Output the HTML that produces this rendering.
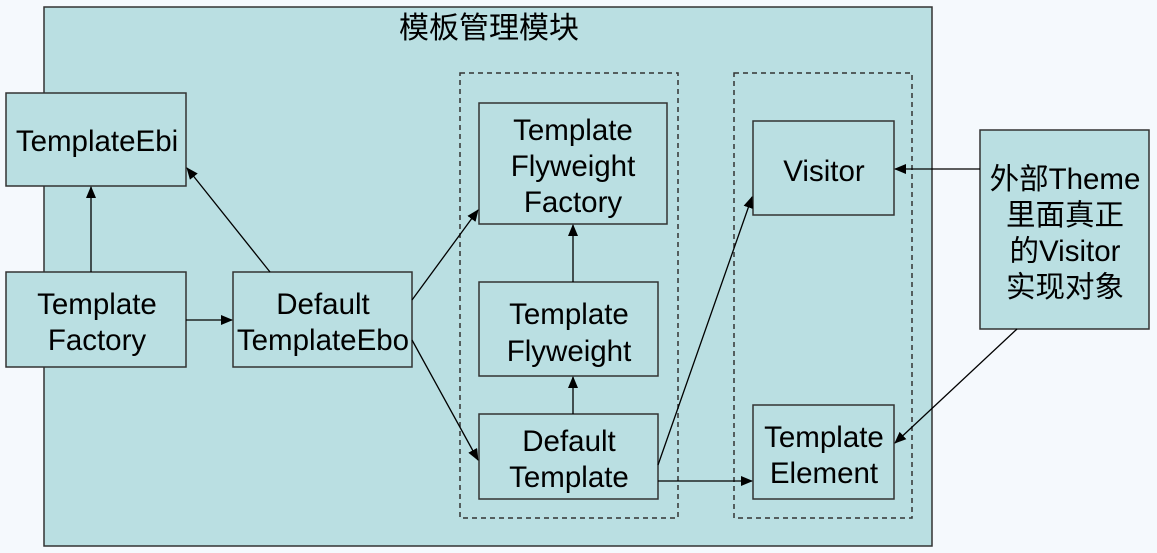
<!DOCTYPE html>
<html><head><meta charset="utf-8"><style>
html,body{margin:0;padding:0;background:#f5f9fd;}
svg{display:block}
text{font-family:"Liberation Sans","Noto Sans CJK SC",sans-serif;font-size:29.5px;fill:#000;text-anchor:middle}
</style></head><body>
<svg width="1157" height="553" viewBox="0 0 1157 553">
<defs><marker id="a" markerWidth="12" markerHeight="10" refX="11" refY="5" orient="auto" markerUnits="userSpaceOnUse"><path d="M0,0 L12,5 L0,10 z" fill="#000"/></marker></defs>
<g stroke="#333" stroke-width="1.5" fill="#badfe2">
<rect x="44" y="7" width="888" height="539"/>
<rect x="460" y="73" width="218" height="445" fill="none" stroke-dasharray="5,4"/>
<rect x="734" y="73" width="178" height="445" fill="none" stroke-dasharray="5,4"/>
<rect x="6" y="93" width="180" height="93"/>
<rect x="6" y="272" width="180" height="95"/>
<rect x="233" y="272" width="179" height="95"/>
<rect x="479" y="103" width="188" height="121"/>
<rect x="479" y="282" width="179" height="94"/>
<rect x="479" y="414" width="179" height="85"/>
<rect x="753" y="121" width="141" height="94"/>
<rect x="753" y="405" width="141" height="94"/>
<rect x="980" y="130" width="169" height="199"/>
</g>
<g stroke="#000" stroke-width="1.3" fill="none" marker-end="url(#a)">
<line x1="91" y1="272" x2="91" y2="187"/>
<line x1="270" y1="272" x2="187" y2="168"/>
<line x1="186" y1="320" x2="232" y2="320"/>
<line x1="412" y1="300" x2="478" y2="210"/>
<line x1="412" y1="340" x2="478" y2="460"/>
<line x1="573" y1="282" x2="573" y2="225"/>
<line x1="573" y1="414" x2="573" y2="377"/>
<line x1="658" y1="465" x2="752" y2="197"/>
<line x1="658" y1="481" x2="752" y2="481"/>
<line x1="980" y1="169" x2="895" y2="169"/>
<line x1="1017" y1="329" x2="895" y2="443"/>
</g>
<text x="489" y="38" style="font-size:30px">模板管理模块</text>
<text x="97" y="151">TemplateEbi</text>
<text x="97" y="314">Template</text><text x="97" y="350">Factory</text>
<text x="323" y="314">Default</text><text x="323" y="350">TemplateEbo</text>
<text x="573" y="140">Template</text><text x="573" y="176">Flyweight</text><text x="573" y="212">Factory</text>
<text x="569" y="324">Template</text><text x="569" y="361">Flyweight</text>
<text x="569" y="451">Default</text><text x="569" y="487">Template</text>
<text x="824" y="181">Visitor</text>
<text x="824" y="447">Template</text><text x="824" y="483">Element</text>
<text x="1065" y="189">外部Theme</text><text x="1065" y="225">里面真正</text><text x="1065" y="261">的Visitor</text><text x="1065" y="297">实现对象</text>
</svg>
</body></html>
